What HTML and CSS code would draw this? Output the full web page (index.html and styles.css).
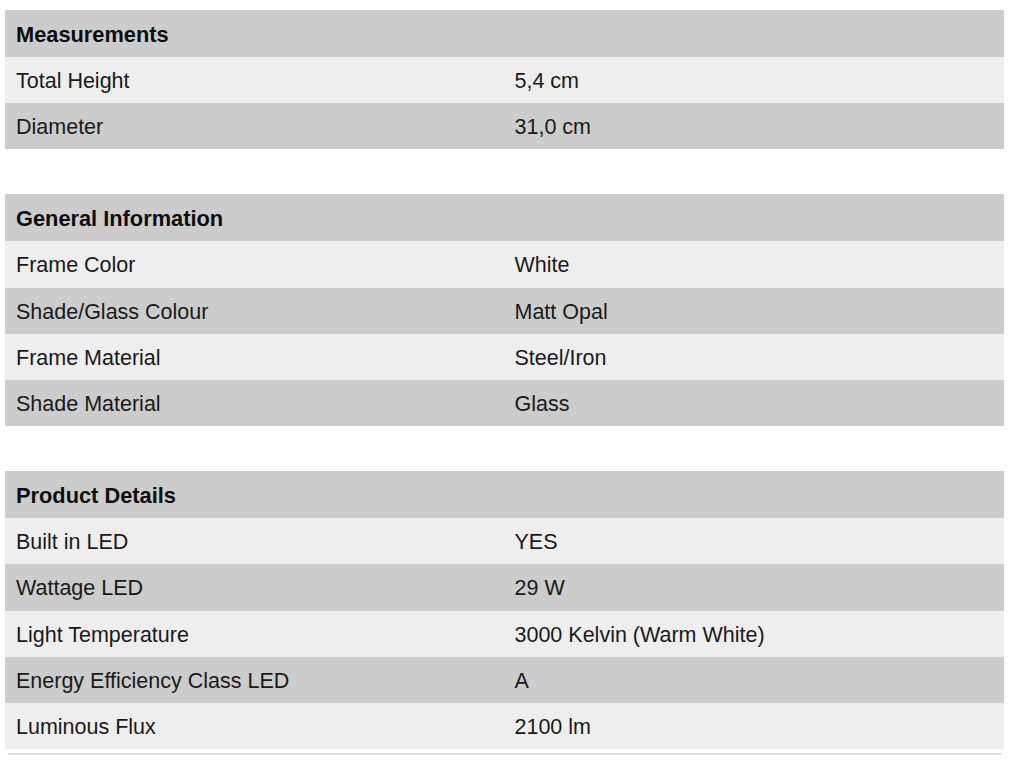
FILE: index.html
```html
<!DOCTYPE html>
<html>
<head>
<meta charset="utf-8">
<link rel="stylesheet" href="styles.css">
</head>
<body>
<div class="page">
  <table class="spec">
    <tr class="head"><th colspan="2">Measurements</th></tr>
    <tr class="light"><td>Total Height</td><td>5,4 cm</td></tr>
    <tr class="dark"><td>Diameter</td><td>31,0 cm</td></tr>
  </table>
  <table class="spec">
    <tr class="head"><th colspan="2">General Information</th></tr>
    <tr class="light"><td>Frame Color</td><td>White</td></tr>
    <tr class="dark"><td>Shade/Glass Colour</td><td>Matt Opal</td></tr>
    <tr class="light"><td>Frame Material</td><td>Steel/Iron</td></tr>
    <tr class="dark"><td>Shade Material</td><td>Glass</td></tr>
  </table>
  <table class="spec">
    <tr class="head"><th colspan="2">Product Details</th></tr>
    <tr class="light"><td>Built in LED</td><td>YES</td></tr>
    <tr class="dark"><td>Wattage LED</td><td>29 W</td></tr>
    <tr class="light"><td>Light Temperature</td><td>3000 Kelvin (Warm White)</td></tr>
    <tr class="dark"><td>Energy Efficiency Class LED</td><td>A</td></tr>
    <tr class="light"><td>Luminous Flux</td><td>2100 lm</td></tr>
  </table>
  <div class="rule"></div>
</div>
</body>
</html>
```
FILE: styles.css
```css
html, body {
  margin: 0;
  padding: 0;
  background: #ffffff;
}
body {
  font-family: "Liberation Sans", Arial, sans-serif;
  color: #1a1a1a;
}
.page {
  padding: 10px 16px 0 5px;
  display: flex;
  flex-direction: column;
  gap: 45px;
}
.spec {
  width: 999px;
  border-collapse: collapse;
  table-layout: fixed;
}
.spec th,
.spec td {
  height: 46.2px;
  padding: 2px 11px 0;
  font-size: 21.5px;
  line-height: 26px;
  text-align: left;
  vertical-align: middle;
  box-sizing: border-box;
}
.spec th {
  font-weight: bold;
  font-size: 21.8px;
  height: 47px;
  color: #0d0d0d;
}
.spec td:first-child {
  width: 499px;
}
.spec td + td {
  padding-left: 10px;
}
.head {
  background: #cccccc;
}
.light {
  background: #eeeeee;
}
.dark {
  background: #cccccc;
}
.rule {
  margin: -41px 0 0 3px;
  width: 993px;
  height: 2px;
  background: #dddddd;
}
```
